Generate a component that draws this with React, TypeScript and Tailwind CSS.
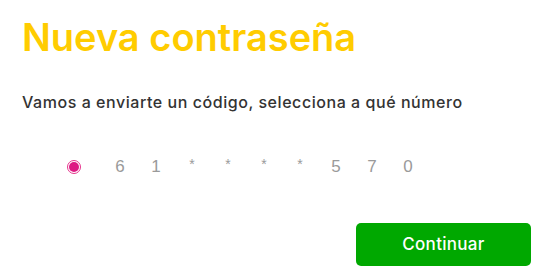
export default function App() {
  const digits = ["6", "1", "*", "*", "*", "*", "5", "7", "0"];
  return (
    <div className="w-[550px] h-[280px] bg-white relative overflow-hidden" style={{ fontFamily: "Inter, 'Noto Sans', sans-serif" }}>
      <div className="pl-[22px] pt-[13px]">
        <h1 className="text-[38px] leading-[48px] font-semibold text-[#ffcc00]">Nueva contraseña</h1>
        <p className="mt-[31px] text-[16px] leading-[20px] font-medium text-[#333333] tracking-[0.55px]">
          Vamos a enviarte un código, selecciona a qué número
        </p>
        <div className="mt-[45px] flex items-center h-[20px]">
          <div className="ml-[45px] w-[14px] h-[14px] rounded-full border border-[#e6338c] flex items-center justify-center">
            <div className="w-[10px] h-[10px] rounded-full bg-[#dd1a83]" />
          </div>
          <div className="ml-[21px] flex" style={{ fontFamily: "'Liberation Sans', Arial, sans-serif" }}>
            {digits.map((d, i) => (
              <span key={i} className={`w-[36px] text-center text-[#9a9a9a] ${d === "*" ? "text-[14px]" : "text-[17px]"}`}>{d}</span>
            ))}
          </div>
        </div>
      </div>
      <div className="absolute left-[356px] top-[223px]">
        <button className="w-[175px] h-[43px] rounded-[5px] bg-[#00a800] text-white text-[17px] font-medium tracking-[0.3px]">Continuar</button>
      </div>
    </div>
  );
}
